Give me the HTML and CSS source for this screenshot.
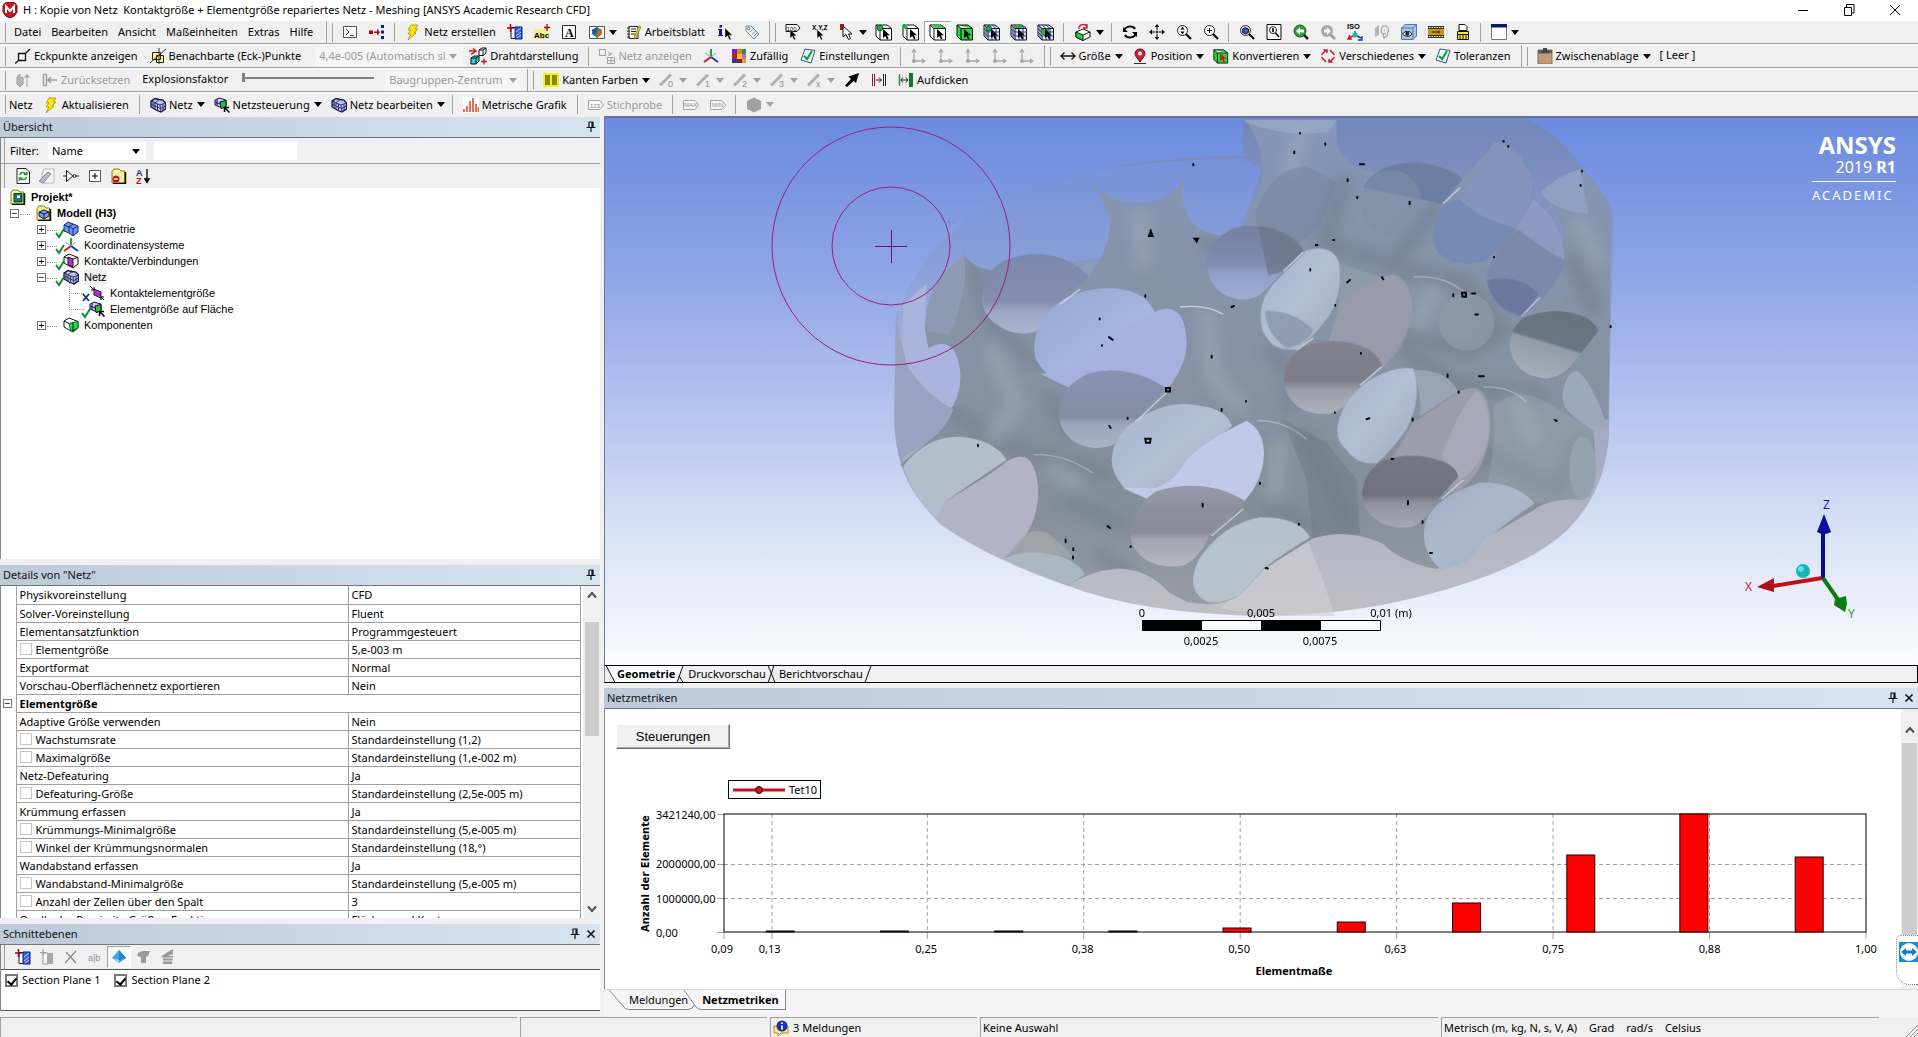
FILE: index.html
```html
<!DOCTYPE html>
<html lang="de">
<head>
<meta charset="utf-8">
<title>H : Kopie von Netz - Meshing</title>
<link rel="stylesheet" href="styles.css">
</head>
<body>

<svg class="defs" aria-hidden="true">
  <symbol id="cur" viewBox="0 0 16 16"><path d="M7 4V14L9.500 11.800L11.500 16L13.200 15.200L11.200 11.200H14.500Z" fill="#000" stroke="#fff" stroke-width=".4"/></symbol>
  <symbol id="app" viewBox="0 0 16 16"><path d="M1 4Q2 0 8 0Q14 0 15 4V10Q13 15 8 16Q3 15 1 10Z" fill="#c8161d" stroke="#7d0a10"/><path d="M4 11V4.500L8 9L12 4.500V11" fill="none" stroke="#fff" stroke-width="2"/></symbol>
  <symbol id="prompt" viewBox="0 0 16 16"><path d="M1.500 2.500H14.500V13.500H1.500Z" fill="#fff" stroke="#555"/><path d="M4 5L7 8L4 11M8 11.500H12" fill="none" stroke="#444"/></symbol>
  <symbol id="flow" viewBox="0 0 16 16"><path d="M0 6.500H4V10H0ZM5 7.500H8V9H5ZM8 5L11 8.200L8 11.500Z" fill="#b00018"/><path d="M12 1H15V4H12ZM12 6.500H15V9.500H12ZM12 12H15V15H12Z" fill="#0a14c8"/></symbol>
  <symbol id="bolt" viewBox="0 0 16 16"><path d="M6 1H13L10 5H13L9 9H11L3 16L6 10H3L6 6H3Z" fill="#ffe80a" stroke="#a89000" stroke-width=".8"/></symbol>
  <symbol id="plane" viewBox="0 0 16 16"><path d="M4 3.500H11V14.500H4Z" fill="#fff" stroke="#112"/><path d="M8 3H15V15H8Z" fill="#3a5fd0" stroke="#0a1a80"/><path d="M9 8L14 4M9 12L14 8M10 14L14 11" stroke="#bcd0ff"/><path d="M0 4H7M3.500 0V8" stroke="#a00018" stroke-width="1.500"/></symbol>
  <symbol id="abc" viewBox="0 0 16 16"><path d="M0 5H14V15H0Z" fill="#f7f08a"/><text x="0" y="14" font-size="8" font-weight="700">Abc</text><path d="M10 3.500H16M13 0V7" stroke="#a00018" stroke-width="1.300"/></symbol>
  <symbol id="figA" viewBox="0 0 16 16"><path d="M1.500 1.500H14.500V14.500H1.500Z" fill="#fff" stroke="#222"/><text x="4" y="12.500" font-size="12" class="serif">A</text></symbol>
  <symbol id="pic" viewBox="0 0 16 16"><path d="M.5 2.500H15.500V14.500H.5Z" fill="#fff" stroke="#555"/><path d="M3 6L8 3L13 6V10L8 14L3 10Z" fill="#13a04b"/><path d="M8 8L13 5V10L8 14Z" fill="#d5601a"/><path d="M3 6L8 3V9L4 11Z" fill="#1e50d0"/></symbol>
  <symbol id="sheet" viewBox="0 0 16 16"><path d="M3 2.500H12V14.500H3Z" fill="#fff" stroke="#222"/><path d="M5 5H10M5 7.500H10M5 10H9M1 4H4M1 7H4M1 10H4M1 13H4" stroke="#222"/><path d="M15 3L10 14L8.500 15V12L13 2Z" fill="#f0c030" stroke="#805a00" stroke-width=".6"/></symbol>
  <symbol id="icur" viewBox="0 0 16 16"><path d="M2 5H5V11H6V12H1V11H2V6H1V5ZM2.500 1H5V3.500H2.500Z" fill="#1010c0"/><use href="#cur" width="16" height="16" x="1"/></symbol>
  <symbol id="tag" viewBox="0 0 16 16"><path d="M2 2H7L15 10L10 15L2 7Z" fill="#e3eefa" stroke="#6f8fae"/><circle cx="4.500" cy="4.500" r="1.200" fill="#fff" stroke="#555" stroke-width=".7"/><path d="M6 8L10 4M8 10L12 7M10 12L13 9" stroke="#6f8fae" stroke-width=".8"/></symbol>
  <symbol id="c100" viewBox="0 0 16 16"><path d="M1 .5H12L15 4L12 7.500H1Z" fill="#fff" stroke="#111"/><text x="1.500" y="6.500" font-size="6">100</text><use href="#cur" y="2" x="-2" width="16" height="14"/></symbol>
  <symbol id="cxyz" viewBox="0 0 16 16"><text x="0" y="5.500" font-size="6.500" font-weight="700">X,Y,Z</text><use href="#cur" y="2" x="-2" width="16" height="14"/></symbol>
  <symbol id="redcur" viewBox="0 0 16 16"><path d="M1 0H5V6H1Z" fill="#b01020"/><path d="M4 2V13L7 10.500L9.500 15.500L11.500 14.500L9.500 10H13Z" fill="#fff" stroke="#111"/></symbol>
  <symbol id="box" viewBox="0 0 18 18"><path d="M1 2L5 5.500H16.500V17H5L1 13ZM5 5.500V17M1 2H12L16.500 5.500" stroke="#111" stroke-linejoin="round"/></symbol>
  <symbol id="cur2" viewBox="0 0 18 18"><path d="M8 6V15L10.200 13L12 16.500L13.500 15.700L12 12.300H15Z"/></symbol>
  <symbol id="selv" viewBox="0 0 18 18"><use href="#box" fill="#fff"/><circle cx="5" cy="5" r="2.800" fill="#1fb04a" stroke="#063"/><use href="#cur2"/></symbol>
  <symbol id="sele" viewBox="0 0 18 18"><use href="#box" fill="#fff"/><path d="M1 2L5 5.500" stroke="#1fb04a" stroke-width="3"/><use href="#cur2"/></symbol>
  <symbol id="self" viewBox="0 0 18 18"><use href="#box" fill="#fff"/><path d="M2 2.500H12L15 5H5.500Z" fill="#22e040"/><use href="#cur2"/></symbol>
  <symbol id="selb" viewBox="0 0 18 18"><use href="#box" fill="#1fdc35"/><use href="#cur2"/></symbol>
  <symbol id="conv" viewBox="0 0 18 18"><use href="#box" fill="#1fdc35"/><use href="#cur2" fill="#d01818"/></symbol>
  <symbol id="grid" viewBox="0 0 18 18"><use href="#box" fill="#e4e8ff"/><path d="M5 9H16M5 13H16M9 5V17M13 5V17M1 6L5 9M1 9.500L5 13M3 4V15M5 2L9 5.500M9 2L13 5.500" stroke="#223088" stroke-width=".9"/></symbol>
  <symbol id="mn" viewBox="0 0 18 18"><use href="#grid"/><circle cx="6" cy="5.500" r="2.500" fill="#1fb04a" stroke="#063"/><use href="#cur2"/></symbol>
  <symbol id="mf" viewBox="0 0 18 18"><use href="#grid"/><path d="M2 2.500H12L15 5H5.500Z" fill="#1fb04a"/><use href="#cur2"/></symbol>
  <symbol id="me" viewBox="0 0 18 18"><use href="#grid"/><path d="M5 6H12V13H5Z" fill="#1fb04a"/><use href="#cur2"/></symbol>
  <symbol id="crot" viewBox="0 0 18 18"><path d="M2 9L9 6L16 9V14L9 17.500L2 14Z" fill="#fff" stroke="#111"/><path d="M2 9L9 12V17.500L2 14Z" fill="#1fdc35" stroke="#111"/><path d="M9 12L16 9" stroke="#111"/><path d="M5 6C4 1 12 0 13 4M13 1V5H9" fill="none" stroke="#d01828" stroke-width="1.300"/></symbol>
  <symbol id="rot" viewBox="0 0 16 16"><path d="M2 7C3 2 11 1 13 5M14 9C13 14 5 15 3 11" fill="none" stroke="#000" stroke-width="2"/><path d="M1 3V8H6ZM15 13V8H10Z"/></symbol>
  <symbol id="pan" viewBox="0 0 16 16"><path d="M8 0L10.500 3H5.500ZM8 16L10.500 13H5.500ZM0 8L3 5.500V10.500ZM16 8L13 5.500V10.500Z"/><path d="M8 2V6M8 10V14M2 8H6M10 8H14M6.500 8H9.500M8 6.500V9.500" stroke="#000"/></symbol>
  <symbol id="lens" viewBox="0 0 16 16"><circle cx="6.500" cy="6.500" r="5" fill="#f5f8ff" stroke="#222"/><path d="M10 10L15 15" stroke="#111" stroke-width="2.300"/></symbol>
  <symbol id="zoom" viewBox="0 0 16 16"><use href="#lens"/><path d="M6.500 2.500L8.500 5.500H4.500ZM6.500 10.500L8.500 7.500H4.500Z"/></symbol>
  <symbol id="zoomb" viewBox="0 0 16 16"><use href="#lens"/><path d="M4 6.500H9M6.500 4V9" stroke="#222"/></symbol>
  <symbol id="fit" viewBox="0 0 16 16"><use href="#lens"/><path d="M3.500 5L6.500 3.500L9.500 5V8.500L6.500 10L3.500 8.500Z" fill="#3a56b8" stroke="#112"/></symbol>
  <symbol id="zbox" viewBox="0 0 16 16"><path d="M1 .5H15V15.500H1Z" fill="#fff" stroke="#000"/><circle cx="7" cy="6" r="3.500" fill="#fff" stroke="#222"/><path d="M7 4V8M9.500 9L13 13" stroke="#000" stroke-width="1.600"/></symbol>
  <symbol id="prev" viewBox="0 0 16 16"><circle cx="7" cy="7" r="6" fill="#2d9a3c" stroke="#1c5e26"/><path d="M11 11L15 15" stroke="#222" stroke-width="2.500"/><path d="M3 7L7 3V5.500H11V8.500H7V11Z" fill="#fff"/></symbol>
  <symbol id="next" viewBox="0 0 16 16"><circle cx="7" cy="7" r="6" fill="#a8a8a8"/><path d="M11 11L15 15" stroke="#999" stroke-width="2.500"/><path d="M11 7L7 3V5.500H4V8.500H7V11Z" fill="#f4f4f4"/></symbol>
  <symbol id="iso" viewBox="0 0 16 18"><text x="0" y="6" font-size="7.500" font-weight="700">ISO</text><path d="M8 12V8" stroke="#109040" stroke-width="1.500"/><path d="M8 12L2 15M3 12L1 16H5" stroke="#d01828" fill="none" stroke-width="1.400"/><path d="M8 12L14 15M11 17H15V13" stroke="#1530c0" fill="none" stroke-width="1.400"/><circle cx="8" cy="12" r="2.600" fill="#18b8c0"/></symbol>
  <symbol id="face" viewBox="0 0 16 16"><path d="M1 4L5 1V11L1 13Z" fill="#b4b4b4"/><path d="M8 3C12 0 16 4 14 8L13 12L10 14L9 10L7 8Z" fill="none" stroke="#a8a8a8" stroke-width="1.300"/><path d="M10 6H11M9 10L12 9" stroke="#999"/></symbol>
  <symbol id="eye" viewBox="0 0 16 16"><path d="M.5 4L4 .5H15.500V12L12 15.500H.5Z" fill="#a9c6ea" stroke="#5878a0"/><path d="M.5 4H12V15.500M12 4L15.500 .5" fill="none" stroke="#5878a0"/><path d="M1.500 10C4 6.500 9 6.500 11 10C9 13 4 13 1.500 10Z" fill="#fff" stroke="#111"/><circle cx="6.300" cy="9.800" r="2" fill="#123"/></symbol>
  <symbol id="film" viewBox="0 0 16 16"><path d="M0 2H16V14H0Z" fill="#3c3000"/><path d="M0 5H16V11H0Z" fill="#c9971c"/><path d="M1 3.500H16M1 12.500H16" stroke="#fff" stroke-dasharray="1.500 1"/><path d="M4 8H11M11 6.500V9.500" stroke="#5a3b00" stroke-width="1.300"/></symbol>
  <symbol id="print" viewBox="0 0 16 18"><path d="M4 1.500H10L12 3.500V7.500H4Z" fill="#fff" stroke="#111"/><path d="M2.500 8.500H13.500V16.500H2.500Z" fill="#ffe94a" stroke="#111"/><path d="M5 12V16M8 12V16M11 12V16M2 11.500H14" stroke="#111"/></symbol>
  <symbol id="win" viewBox="0 0 16 16"><path d="M.5 .5H15.500V15.500H.5Z" fill="#fff" stroke="#777"/><path d="M0 0H16V3.500H0Z" fill="#0a1a66"/></symbol>
  <symbol id="eck" viewBox="0 0 16 16"><path d="M3.500 5.500H10.500V12.500H3.500ZM10.500 5.500L15 1M3.500 12.500L0 15.500" fill="none" stroke="#111" stroke-width="1.300"/></symbol>
  <symbol id="nach" viewBox="0 0 16 16"><path d="M2.500 4.500H10.500V11.500H2.500ZM6.500 7.500H13.500V14.500H6.500Z" fill="#fff27a" stroke="#222"/><path d="M0 15L16 1M9 0V16" stroke="#333"/></symbol>
  <symbol id="draht" viewBox="0 0 18 18"><path d="M10 3L13 1H17V6L14 8.500H10ZM10 3H14V8.500M14 3L17 1" fill="#fff" stroke="#111"/><path d="M2 11L5 9H10V14L7 17H2ZM2 11H7V17M7 11L10 9" fill="#2fd0d8" stroke="#111"/><path d="M0 4H6M4 1.500L7 4L4 6.500M2 7L4 6M12 14.500H18M15 11.500V17.500" stroke="#c01828" fill="none" stroke-width="1.400"/></symbol>
  <symbol id="show" viewBox="0 0 16 16"><path d="M.5 1.500H6.500V7.500H.5ZM9 4L12 7M12 4V7H9M8.500 9.500H15.500V15.500H8.500ZM12 9.500V15.500M8.500 12.500H15.500" fill="none" stroke="#a0a0a0"/></symbol>
  <symbol id="axes" viewBox="0 0 16 16"><path d="M8 9V1" stroke="#18a838" stroke-width="2"/><path d="M8 9L1 14" stroke="#d01828" stroke-width="2"/><path d="M8 9L15 14" stroke="#1838c0" stroke-width="2"/><path d="M8 9L2 5M8 9L13 5" stroke="#89a"/></symbol>
  <symbol id="rand" viewBox="0 0 16 16"><path d="M1 1H6V6H1Z" fill="#7a1fb0"/><path d="M6 1H11V6H6Z" fill="#e08020"/><path d="M11 1H15V6H11Z" fill="#1f8f5a"/><path d="M1 6H6V11H1Z" fill="#c01828"/><path d="M6 6H11V11H6Z" fill="#e8d020"/><path d="M11 6H15V11H11Z" fill="#d060c0"/><path d="M1 11H6V15H1Z" fill="#1a40a0"/><path d="M6 11H11V15H6Z" fill="#802020"/><path d="M11 11H15V15H11Z" fill="#e0a040"/></symbol>
  <symbol id="sett" viewBox="0 0 16 16"><path d="M5 1L15 2.500L11 15L1 12Z" fill="#f2f8ff" stroke="#2b5a88"/><path d="M4 8L7 11L12 3" fill="none" stroke="#14a030" stroke-width="2.200"/></symbol>
  <symbol id="ax" viewBox="0 0 16 16"><path d="M4 13V2M2 4.500L4 1.500L6 4.500M4 13H14M12 11L15 13L12 15" fill="none" stroke="#a6a6a6" stroke-width="1.300"/><circle cx="4" cy="13" r="2" fill="#a6a6a6"/></symbol>
  <symbol id="size" viewBox="0 0 16 16"><path d="M1 8H15M4.500 4.500L1 8L4.500 11.500M11.500 4.500L15 8L11.500 11.500" fill="none" stroke="#111" stroke-width="1.300"/></symbol>
  <symbol id="pin" viewBox="0 0 16 16"><path d="M8 1C3 1 2 6 4 8.500L8 14L12 8.500C14 6 13 1 8 1Z" fill="#c8203a" stroke="#701020"/><circle cx="8" cy="5.500" r="2" fill="#fff"/><path d="M2 15.500H14" stroke="#333"/></symbol>
  <symbol id="misc" viewBox="0 0 16 16"><path d="M6 2L1.500 7M1.500 9L6 14M10 14L14.500 9M14.500 7L10 2M3.500 2H7V5M12.500 14H9V11" fill="none" stroke="#c81840" stroke-width="1.500"/></symbol>
  <symbol id="clip" viewBox="0 0 16 16"><path d="M1 2H15V16H1Z" fill="#c39a78" stroke="#8d6b50"/><path d="M1 2H15V5.500H1Z" fill="#6b5c55"/><path d="M6 0H10V3H12V5H4V3H6Z" fill="#444"/></symbol>
  <symbol id="expl" viewBox="0 0 16 16"><path d="M2 5L5 2V6L8 5V12L5 15L2 12ZM12 15V3M9.500 5.500L12 2.500L14.500 5.500" fill="#b5b5b5" stroke="#a0a0a0"/></symbol>
  <symbol id="reset" viewBox="0 0 16 16"><path d="M1.500 2.500H4.500V13.500H1.500ZM6 8H15M9 5L6 8L9 11" fill="none" stroke="#a0a0a0" stroke-width="1.500"/></symbol>
  <symbol id="kant" viewBox="0 0 16 16"><path d="M0 1H16V15H0Z" fill="#f4f020"/><path d="M2 3H7V13H2ZM9 3H14V13H9Z" fill="#8a8600"/></symbol>
  <symbol id="line" viewBox="0 0 16 16"><path d="M1 13.500L12 2.500" stroke="#b0b0b0" stroke-width="3"/></symbol>
  <symbol id="dart" viewBox="0 0 16 16"><path d="M15 1L12 11L9.500 9L3 15L1 13.500L7 7L4.500 4.500Z"/></symbol>
  <symbol id="ll" viewBox="0 0 16 16"><path d="M1.500 2V14M3.500 2V14" stroke="#9c1030"/><path d="M12.500 2V14M14.500 2V14M5 8H10M8 5.500L10.500 8L8 10.500" stroke="#222" fill="none"/></symbol>
  <symbol id="auf" viewBox="0 0 16 16"><path d="M1.500 2V14" stroke="#1b8a30" stroke-width="1.400"/><path d="M11 1H15V15H11Z" fill="#137a28"/><path d="M3 8H10M5 5.500L3 8L5 10.500M8 5.500L10 8L8 10.500" stroke="#222" fill="none"/></symbol>
  <symbol id="cubes" viewBox="0 0 16 16"><path d="M1 4L5 1.500L9 2.500L13 3L15.500 6V12L11 15L7 13.500L1 10Z" fill="#bcc2f2" stroke="#15154a" stroke-width="1.300"/><path d="M1 4L5 6V12M5 6L9 2.500M5 6L10 8L15.500 6M10 8L11 15M3 3V11M7.500 7V13M13 7V14M1 7L5 9L10.500 11.500L15.500 9" stroke="#15154a" fill="none" stroke-width=".8"/></symbol>
  <symbol id="cubesg" viewBox="0 0 16 16"><path d="M1 3L5 1L12 3V9L8 11L1 8Z" fill="#c4c9f4" stroke="#15154a"/><path d="M6 5L12 3.500V10L7 11.500Z" fill="#28c040" stroke="#111"/><path d="M3 2V9M1 5L6 7" stroke="#15154a"/><path d="M15.500 15.500L11 11M10.500 15V10.500H15" stroke="#000" stroke-width="1.500" fill="none"/></symbol>
  <symbol id="hist" viewBox="0 0 16 16"><path d="M0 0H16V16H0Z" fill="#fff"/><path d="M1 15V12M4 15V9M7 15V4M10 15V1M13 15V7M15.500 15V10" stroke="#df6a4d" stroke-width="1.900"/></symbol>
  <symbol id="probe" viewBox="0 0 16 16"><path d="M.5 3.500H12L15.500 8L12 12.500H.5Z" fill="#f6f6f6" stroke="#a4a4a4"/></symbol>
  <symbol id="hex" viewBox="0 0 16 16"><path d="M8 .5L15 4V12L8 15.500L1 12V4Z" fill="#a0a0a0"/></symbol>
  <symbol id="refresh" viewBox="0 0 16 16"><path d="M2 .5H11L14.500 4V15.500H2Z" fill="#fff" stroke="#222"/><path d="M5 7C5 4 10 3.500 11 6.500M11.500 9C11 12 6 12.500 5 10M9 6.500H12V4M7.500 10H4.500V13" fill="none" stroke="#1c9a34" stroke-width="1.500"/></symbol>
  <symbol id="erase" viewBox="0 0 16 16"><path d="M5 1H15V15H3V6Z" fill="#f5f5f8" stroke="#b8b8c0"/><path d="M0 13L9 4L12 6L4 15Z" fill="#b9bccb" stroke="#85879a"/></symbol>
  <symbol id="filt" viewBox="0 0 16 16"><path d="M3.500 2.500L10 8L3.500 13.500ZM0 8H3M12.500 8H16" fill="none" stroke="#222"/><circle cx="11.500" cy="8" r="1.500" fill="none" stroke="#222"/></symbol>
  <symbol id="plus" viewBox="0 0 16 16"><path d="M2.500 2.500H13.500V13.500H2.500Z" fill="#fff" stroke="#555"/><path d="M5 8H11M8 5V11" stroke="#000"/></symbol>
  <symbol id="fold" viewBox="0 0 16 16"><path d="M1 3.500L3 1H8L10 3H13.500V15H1Z" fill="#f4ef9a" stroke="#8c7a1c"/><path d="M14.500 4V15.500H2" stroke="#111" fill="none" stroke-width="1.500"/></symbol>
  <symbol id="folder" viewBox="0 0 16 16"><use href="#fold"/><circle cx="5" cy="11" r="3.500" fill="#c0182a"/><path d="M3 11H7" stroke="#fff" stroke-width="1.400"/></symbol>
  <symbol id="az" viewBox="0 0 16 16"><text x="1" y="7.500" font-size="9" font-weight="700" fill="#1a2a90">A</text><text x="1" y="15.500" font-size="9" font-weight="700" fill="#b01828">Z</text><path d="M12 1V14M9.800 11L12 14.500L14.200 11Z" stroke="#000" stroke-width="1.300"/></symbol>
  <symbol id="proj" viewBox="0 0 16 16"><use href="#fold"/><path d="M4 4.500H12V13H4Z" fill="#16806a" stroke="#04362c"/><path d="M7 6.500H10V9H7Z" fill="#fff"/></symbol>
  <symbol id="model" viewBox="0 0 16 16"><use href="#fold"/><path d="M3 7L8 5L13 7V11L8 14L3 11Z" fill="#7f9be8" stroke="#101848"/><path d="M3 7L8 9L13 7M8 9V14" stroke="#101848" fill="none"/></symbol>
  <symbol id="geo" viewBox="0 0 16 16"><path d="M1 4L5 1L9 2.500L15 5V11L10 15L6 12L1 10Z" fill="#6e97ea" stroke="#122a78"/><path d="M1 4L6 6V12M6 6L10 3M10 8V15M6 5L10 8L15 5" stroke="#122a78" fill="none"/></symbol>
  <symbol id="kont" viewBox="0 0 16 16"><path d="M1 4L6 1L15 4.500V11L10 15L1 10Z" fill="#fff" stroke="#111"/><path d="M5 4L10 6V14L5 12Z" fill="#a838c0" stroke="#301038"/><path d="M10 6L15 4.500M1 4L5 5.500" stroke="#111"/></symbol>
  <symbol id="ctc" viewBox="0 0 16 16"><path d="M5 4L12 7V13L5 10Z" fill="#a838c0" stroke="#301038"/><path d="M1 1L5 5M5 2V5H2M15 15L12 12M12 15V12H15" stroke="#000" fill="none"/></symbol>
  <symbol id="komp" viewBox="0 0 16 16"><path d="M1 4L6 1L15 4.500V11L10 15L1 10Z" fill="#fff" stroke="#111"/><path d="M6 6.500L15 4.500V11L8 14.500Z" fill="#28dc40" stroke="#063"/><path d="M1 4L6 6.500M10 6V14" stroke="#111"/></symbol>
  <symbol id="check" viewBox="0 0 16 16"><path d="M4 9L7 13L12 5" fill="none" stroke="#128a28" stroke-width="2"/></symbol>
  <symbol id="cross" viewBox="0 0 16 16"><path d="M5 6L11 13M11 6L5 13" stroke="#123070" stroke-width="1.800"/></symbol>
  <symbol id="push" viewBox="0 0 12 12"><path d="M3.500 1H8.500M4 1V6.500M8 1V6.500M7 1V6M1.500 6.500H10.500M6 7V11" stroke="#111" stroke-width="1.200"/></symbol>
  <symbol id="close" viewBox="0 0 12 12"><path d="M2.500 2.500L9.500 9.500M9.500 2.500L2.500 9.500" stroke="#111" stroke-width="1.600"/></symbol>
  <symbol id="splane" viewBox="0 0 16 16"><path d="M4 4H9V15H4Z" fill="#f6f6f6" stroke="#999"/><path d="M8 4H14V15H8Z" fill="#a8a8a8"/><path d="M1 3.500H7M4 0V7" stroke="#999"/></symbol>
  <symbol id="gx" viewBox="0 0 16 16"><path d="M3 3L13 14M13 2L2 14" stroke="#888" stroke-width="1.200"/></symbol>
  <symbol id="cap" viewBox="0 0 16 16"><path d="M8 1L15 9L8 14L1 9Z" fill="#3fa6e2"/><path d="M8 1L15 9L8 11Z" fill="#2c7fc4"/><path d="M1 9L8 11V14Z" fill="#9bd4f5"/></symbol>
  <symbol id="gcap" viewBox="0 0 16 16"><path d="M3 4L7 2H15L13 7L11 8V14H6V8L2 7Z" fill="#999"/></symbol>
  <symbol id="gcap2" viewBox="0 0 16 16"><path d="M7 4L14 0V5L9 7H14L13 15H4V9L2 8Z" fill="#999"/><path d="M3 9H14M4 12H14" stroke="#e8e8e8"/></symbol>
  <symbol id="info" viewBox="0 0 16 16"><path d="M1 6H15V13H8L5 16V13H1Z" fill="#ffe98a" stroke="#b08a10"/><circle cx="9" cy="6" r="5.500" fill="#1233b8"/><path d="M9 5.500V9.500M9 2.500V4" stroke="#fff" stroke-width="1.800"/></symbol>
  <symbol id="up" viewBox="0 0 12 12"><path d="M2 8.500L6 4L10 8.500" fill="none" stroke="#505050" stroke-width="2"/></symbol>
</svg>

<header class="title">
  <svg class="i"><use href="#app"/></svg>
  <h1>H : Kopie von Netz&nbsp; Kontaktgröße + Elementgröße repariertes Netz - Meshing [ANSYS Academic Research CFD]</h1>
  <div class="winbtns">
    <button aria-label="Minimieren"><svg viewBox="0 0 12 12"><path d="M1 6.500H11" stroke="#000"/></svg></button>
    <button aria-label="Verkleinern"><svg viewBox="0 0 12 12"><path d="M1.500 3.500H8.500V11.500H1.500ZM3.500 3V.5H11V9H9" fill="none" stroke="#000"/></svg></button>
    <button aria-label="Schließen"><svg viewBox="0 0 12 12"><path d="M1 1L11 11M11 1L1 11" stroke="#000"/></svg></button>
  </div>
</header>

<div class="toolbars">
  <div class="row">
    <nav class="bar menu">
      <button>Datei</button><button>Bearbeiten</button><button>Ansicht</button><button>Maßeinheiten</button><button>Extras</button><button>Hilfe</button>
    </nav>
    <div class="bar">
      <button class="ic" aria-label="Konsole"><svg class="i"><use href="#prompt"/></svg></button>
      <button class="ic" aria-label="Verknüpfen"><svg class="i"><use href="#flow"/></svg></button>
      <i class="sep"></i>
      <button><svg class="i"><use href="#bolt"/></svg>Netz erstellen</button>
      <button class="ic" aria-label="Ebene"><svg class="i"><use href="#plane"/></svg></button>
      <button class="ic" aria-label="Beschriftung"><svg class="i"><use href="#abc"/></svg></button>
      <button class="ic" aria-label="Abbildung"><svg class="i"><use href="#figA"/></svg></button>
      <button class="drop" aria-label="Bild"><svg class="i"><use href="#pic"/></svg></button>
      <button><svg class="i"><use href="#sheet"/></svg>Arbeitsblatt</button>
      <button class="ic" aria-label="Information"><svg class="i"><use href="#icur"/></svg></button>
      <button class="ic" aria-label="Etikett"><svg class="i"><use href="#tag"/></svg></button>
    </div>
    <div class="bar">
      <button class="ic" aria-label="Wert"><svg class="i"><use href="#c100"/></svg></button>
      <button class="ic" aria-label="Koordinaten"><svg class="i"><use href="#cxyz"/></svg></button>
      <button class="drop" aria-label="Auswahlmodus"><svg class="i"><use href="#redcur"/></svg></button>
      <button class="ic" aria-label="Punkt"><svg class="i b"><use href="#selv"/></svg></button>
      <button class="ic" aria-label="Kante"><svg class="i b"><use href="#sele"/></svg></button>
      <button class="ic on" aria-label="Fläche"><svg class="i b"><use href="#self"/></svg></button>
      <button class="ic" aria-label="Körper"><svg class="i b"><use href="#selb"/></svg></button>
      <button class="ic" aria-label="Knoten"><svg class="i b"><use href="#mn"/></svg></button>
      <button class="ic" aria-label="Elementfläche"><svg class="i b"><use href="#mf"/></svg></button>
      <button class="ic" aria-label="Element"><svg class="i b"><use href="#me"/></svg></button>
      <i class="sep"></i>
      <button class="drop" aria-label="Erweitern"><svg class="i b"><use href="#crot"/></svg></button>
      <i class="sep"></i>
      <button class="ic" aria-label="Drehen"><svg class="i"><use href="#rot"/></svg></button>
      <button class="ic" aria-label="Verschieben"><svg class="i"><use href="#pan"/></svg></button>
      <button class="ic" aria-label="Zoom"><svg class="i"><use href="#zoom"/></svg></button>
      <button class="ic" aria-label="Zoomfenster"><svg class="i"><use href="#zoomb"/></svg></button>
      <i class="sep"></i>
      <button class="ic" aria-label="Einpassen"><svg class="i"><use href="#fit"/></svg></button>
      <button class="ic" aria-label="Lupe"><svg class="i"><use href="#zbox"/></svg></button>
      <button class="ic" aria-label="Zurück"><svg class="i"><use href="#prev"/></svg></button>
      <button class="ic" aria-label="Vor"><svg class="i"><use href="#next"/></svg></button>
      <button class="ic" aria-label="ISO"><svg class="i b"><use href="#iso"/></svg></button>
      <button class="ic" aria-label="Blickrichtung"><svg class="i"><use href="#face"/></svg></button>
      <button class="ic" aria-label="Ansichten"><svg class="i"><use href="#eye"/></svg></button>
      <button class="ic" aria-label="Animation"><svg class="i"><use href="#film"/></svg></button>
      <button class="ic" aria-label="Lineal"><svg class="i b"><use href="#print"/></svg></button>
      <i class="sep"></i>
      <button class="drop" aria-label="Fenster"><svg class="i"><use href="#win"/></svg></button>
    </div>
  </div>

  <div class="row">
    <div class="bar">
      <button><svg class="i"><use href="#eck"/></svg>Eckpunkte anzeigen</button>
      <button><svg class="i"><use href="#nach"/></svg>Benachbarte (Eck-)Punkte</button>
      <span class="sel tol"><select disabled aria-label="Toleranz"><option>4,4e-005 (Automatisch skaliert)</option></select></span>
      <button><svg class="i b"><use href="#draht"/></svg>Drahtdarstellung</button>
      <i class="sep"></i>
      <button disabled><svg class="i"><use href="#show"/></svg>Netz anzeigen</button>
      <button class="ic" aria-label="Koordinatensystem"><svg class="i"><use href="#axes"/></svg></button>
      <button><svg class="i"><use href="#rand"/></svg>Zufällig</button>
      <button><svg class="i"><use href="#sett"/></svg>Einstellungen</button>
      <i class="sep"></i>
      <button class="ic" disabled aria-label="Achse 1"><svg class="i"><use href="#ax"/></svg></button>
      <button class="ic" disabled aria-label="Achse 2"><svg class="i"><use href="#ax"/></svg></button>
      <button class="ic" disabled aria-label="Achse 3"><svg class="i"><use href="#ax"/></svg></button>
      <button class="ic" disabled aria-label="Achse 4"><svg class="i"><use href="#ax"/></svg></button>
      <button class="ic" disabled aria-label="Achse 5"><svg class="i"><use href="#ax"/></svg></button>
    </div>
    <div class="bar">
      <button class="drop"><svg class="i"><use href="#size"/></svg>Größe</button>
      <button class="drop"><svg class="i"><use href="#pin"/></svg>Position</button>
      <button class="drop"><svg class="i"><use href="#conv"/></svg>Konvertieren</button>
      <button class="drop"><svg class="i"><use href="#misc"/></svg>Verschiedenes</button>
      <button><svg class="i"><use href="#sett"/></svg>Toleranzen</button>
    </div>
    <div class="bar">
      <button class="drop"><svg class="i"><use href="#clip"/></svg>Zwischenablage</button>
      <span class="note">[ Leer ]</span>
    </div>
  </div>

  <div class="row">
    <div class="bar">
      <button class="ic" disabled aria-label="Explosion"><svg class="i"><use href="#expl"/></svg></button>
      <button disabled><svg class="i"><use href="#reset"/></svg>Zurücksetzen</button>
      <label class="note" for="expf">Explosionsfaktor</label>
      <input class="slider" id="expf" type="range" value="0">
      <span class="sel"><select disabled aria-label="Zentrum"><option>Baugruppen-Zentrum</option></select></span>
    </div>
    <div class="bar">
      <button class="drop"><svg class="i"><use href="#kant"/></svg>Kanten Farben</button>
      <button class="drop" disabled aria-label="0"><svg class="i"><use href="#line"/><text x="9" y="15">0</text></svg></button>
      <button class="drop" disabled aria-label="1"><svg class="i"><use href="#line"/><text x="9" y="15">1</text></svg></button>
      <button class="drop" disabled aria-label="2"><svg class="i"><use href="#line"/><text x="9" y="15">2</text></svg></button>
      <button class="drop" disabled aria-label="3"><svg class="i"><use href="#line"/><text x="9" y="15">3</text></svg></button>
      <button class="drop" disabled aria-label="x"><svg class="i"><use href="#line"/><text x="9" y="15">x</text></svg></button>
      <button class="ic" aria-label="Pfeil"><svg class="i"><use href="#dart"/></svg></button>
      <button class="ic" aria-label="Abstand"><svg class="i"><use href="#ll"/></svg></button>
      <button><svg class="i"><use href="#auf"/></svg>Aufdicken</button>
    </div>
  </div>

  <div class="row">
    <div class="bar">
      <span class="name">Netz</span>
      <button><svg class="i"><use href="#bolt"/></svg>Aktualisieren</button>
      <i class="sep"></i>
      <button class="drop"><svg class="i"><use href="#cubes"/></svg>Netz</button>
      <button class="drop"><svg class="i"><use href="#cubesg"/></svg>Netzsteuerung</button>
      <button class="drop"><svg class="i"><use href="#cubes"/></svg>Netz bearbeiten</button>
      <i class="sep"></i>
      <button><svg class="i"><use href="#hist"/></svg>Metrische Grafik</button>
      <i class="sep"></i>
      <button disabled><svg class="i"><use href="#probe"/><text class="xs" x="2" y="11">123</text></svg>Stichprobe</button>
      <i class="sep"></i>
      <button class="ic" disabled aria-label="MAX"><svg class="i"><use href="#probe"/><text class="xs" x="1" y="10">MAX</text></svg></button>
      <button class="ic" disabled aria-label="MIN"><svg class="i"><use href="#probe"/><text class="xs" x="2" y="10">MIN</text></svg></button>
      <i class="sep"></i>
      <button class="drop" disabled aria-label="Körper"><svg class="i"><use href="#hex"/></svg></button>
    </div>
  </div>
</div>

<main class="work">
  <div class="left">
    <section class="panel outline">
      <h2>Übersicht<svg class="pb"><use href="#push"/></svg></h2>
      <div class="frame">
        <div class="filter">
          <label for="ff">Filter:</label>
          <span class="sel white"><select id="ff"><option>Name</option></select></span>
          <input class="search" type="text" aria-label="Filtertext">
        </div>
        <div class="tools">
          <button class="ic" aria-label="Aktualisieren"><svg class="i"><use href="#refresh"/></svg></button>
          <button class="ic" aria-label="Löschen"><svg class="i"><use href="#erase"/></svg></button>
          <button class="ic" aria-label="Filter"><svg class="i"><use href="#filt"/></svg></button>
          <button class="ic" aria-label="Erweitern"><svg class="i"><use href="#plus"/></svg></button>
          <button class="ic" aria-label="Ordner"><svg class="i"><use href="#folder"/></svg></button>
          <button class="ic" aria-label="Sortieren"><svg class="i"><use href="#az"/></svg></button>
        </div>
        <ul class="tree">
          <li class="top"><svg class="i"><use href="#proj"/></svg><b>Projekt*</b></li>
          <li><span class="tg">−</span><svg class="i"><use href="#model"/></svg><b>Modell (H3)</b></li>
          <li class="l1"><span class="tg">+</span><svg class="i ok"><use href="#check"/></svg><svg class="i"><use href="#geo"/></svg><span>Geometrie</span></li>
          <li class="l1"><span class="tg">+</span><svg class="i ok"><use href="#check"/></svg><svg class="i"><use href="#axes"/></svg><span>Koordinatensysteme</span></li>
          <li class="l1"><span class="tg">+</span><svg class="i ok"><use href="#check"/></svg><svg class="i"><use href="#kont"/></svg><span>Kontakte/Verbindungen</span></li>
          <li class="l1"><span class="tg">−</span><svg class="i ok"><use href="#check"/></svg><svg class="i"><use href="#cubes"/></svg><span class="cursel">Netz</span></li>
          <li class="l2"><svg class="i ok"><use href="#cross"/></svg><svg class="i"><use href="#ctc"/></svg><span>Kontaktelementgröße</span></li>
          <li class="l2"><svg class="i ok"><use href="#check"/></svg><svg class="i"><use href="#cubesg"/></svg><span>Elementgröße auf Fläche</span></li>
          <li class="l1"><span class="tg">+</span><svg class="i ok"></svg><svg class="i"><use href="#komp"/></svg><span>Komponenten</span></li>
        </ul>
      </div>
    </section>

    <section class="panel details">
      <h2>Details von "Netz"<svg class="pb"><use href="#push"/></svg></h2>
      <div class="frame split">
        <div class="clipbox">
          <table>
            <tr><td class="g"></td><th>Physikvoreinstellung</th><td>CFD</td></tr>
            <tr><td class="g"></td><th>Solver-Voreinstellung</th><td>Fluent</td></tr>
            <tr><td class="g"></td><th>Elementansatzfunktion</th><td>Programmgesteuert</td></tr>
            <tr><td class="g"></td><th><label><input type="checkbox">Elementgröße</label></th><td>5,e-003 m</td></tr>
            <tr><td class="g"></td><th>Exportformat</th><td>Normal</td></tr>
            <tr><td class="g"></td><th>Vorschau-Oberflächennetz exportieren</th><td>Nein</td></tr>
            <tr><td class="g"><span class="tg">−</span></td><th colspan="2" class="head">Elementgröße</th></tr>
            <tr><td class="g"></td><th>Adaptive Größe verwenden</th><td>Nein</td></tr>
            <tr><td class="g"></td><th><label><input type="checkbox">Wachstumsrate</label></th><td>Standardeinstellung (1,2)</td></tr>
            <tr><td class="g"></td><th><label><input type="checkbox">Maximalgröße</label></th><td>Standardeinstellung (1,e-002 m)</td></tr>
            <tr><td class="g"></td><th>Netz-Defeaturing</th><td>Ja</td></tr>
            <tr><td class="g"></td><th><label><input type="checkbox">Defeaturing-Größe</label></th><td>Standardeinstellung (2,5e-005 m)</td></tr>
            <tr><td class="g"></td><th>Krümmung erfassen</th><td>Ja</td></tr>
            <tr><td class="g"></td><th><label><input type="checkbox">Krümmungs-Minimalgröße</label></th><td>Standardeinstellung (5,e-005 m)</td></tr>
            <tr><td class="g"></td><th><label><input type="checkbox">Winkel der Krümmungsnormalen</label></th><td>Standardeinstellung (18,°)</td></tr>
            <tr><td class="g"></td><th>Wandabstand erfassen</th><td>Ja</td></tr>
            <tr><td class="g"></td><th><label><input type="checkbox">Wandabstand-Minimalgröße</label></th><td>Standardeinstellung (5,e-005 m)</td></tr>
            <tr><td class="g"></td><th><label><input type="checkbox">Anzahl der Zellen über den Spalt</label></th><td>3</td></tr>
            <tr><td class="g"></td><th>Quelle der Proximity-Größen-Funktion</th><td>Flächen und Kanten</td></tr>
          </table>
        </div>
        <div class="scroll"><svg><use href="#up"/></svg><i class="thumb t1"></i><svg class="dn"><use href="#up"/></svg></div>
      </div>
    </section>

    <section class="panel planes">
      <h2>Schnittebenen<svg class="pb"><use href="#push"/></svg><svg class="pb"><use href="#close"/></svg></h2>
      <div class="frame">
        <div class="tools">
          <button class="sm" aria-label="Neu"><svg class="i"><use href="#plane"/></svg></button>
          <button class="sm" disabled aria-label="Bearbeiten"><svg class="i"><use href="#splane"/></svg></button>
          <button class="sm" disabled aria-label="Löschen"><svg class="i"><use href="#gx"/></svg></button>
          <button class="sm" disabled aria-label="Umbenennen"><svg class="i"><text x="1" y="12">a|b</text></svg></button>
          <button class="sm on" aria-label="Deckel"><svg class="i"><use href="#cap"/></svg></button>
          <button class="sm" disabled aria-label="Ganze Elemente"><svg class="i"><use href="#gcap"/></svg></button>
          <button class="sm" disabled aria-label="Elementkanten"><svg class="i"><use href="#gcap2"/></svg></button>
        </div>
        <div class="list">
          <label><input type="checkbox" checked>Section Plane 1</label>
          <label><input type="checkbox" checked>Section Plane 2</label>
        </div>
      </div>
    </section>
  </div>

  <div class="right">
    <section class="view" aria-label="Geometrie">
      <svg class="model" viewBox="605 118 1313 547" preserveAspectRatio="xMidYMid slice">
        <defs>
          <linearGradient id="body" gradientUnits="userSpaceOnUse" x1="0" y1="0" x2="0" y2="1480"><stop offset="0" stop-color="#7287ba"/><stop offset=".2" stop-color="#8294c2"/><stop offset=".5" stop-color="#98a3c0"/><stop offset=".75" stop-color="#acb0c2"/><stop offset="1" stop-color="#c0bfc6"/></linearGradient>
          <linearGradient id="thin" gradientUnits="userSpaceOnUse" x1="0" y1="100" x2="0" y2="700"><stop offset="0" stop-color="#7590dc"/><stop offset=".6" stop-color="#8ba0d8"/><stop offset="1" stop-color="#a4b2dc"/></linearGradient>
          <linearGradient id="foam" gradientUnits="userSpaceOnUse" x1="0" y1="0" x2="0" y2="1450"><stop offset="0" stop-color="#8496b8"/><stop offset=".25" stop-color="#8594ac"/><stop offset=".5" stop-color="#8693a4"/><stop offset=".8" stop-color="#858f99"/><stop offset="1" stop-color="#969ca3"/></linearGradient>
          <linearGradient id="pale" x1="0" y1="0" x2="1" y2="1"><stop offset="0" stop-color="#a6b4cd"/><stop offset=".5" stop-color="#b2c0d6"/><stop offset="1" stop-color="#a0acbd"/></linearGradient>
          <linearGradient id="sky" x1="0" y1="0" x2="1" y2="1"><stop offset="0" stop-color="#94a6d2"/><stop offset=".5" stop-color="#a6b6df"/><stop offset="1" stop-color="#b2bde6"/></linearGradient>
          <linearGradient id="cA" x1="0" y1="0" x2="0" y2="1"><stop offset="0" stop-color="#7b88ae"/><stop offset=".6" stop-color="#8590ae"/><stop offset=".72" stop-color="#9ca8c6"/><stop offset="1" stop-color="#aab3cc"/></linearGradient>
          <linearGradient id="cB" x1="0" y1="0" x2="0" y2="1"><stop offset="0" stop-color="#8891b0"/><stop offset=".6" stop-color="#858da6"/><stop offset=".7" stop-color="#9da5bc"/><stop offset="1" stop-color="#aab3c8"/></linearGradient>
          <linearGradient id="cC" x1="0" y1="0" x2="0" y2="1"><stop offset="0" stop-color="#989ba8"/><stop offset=".3" stop-color="#8c909c"/><stop offset=".58" stop-color="#898c97"/><stop offset=".66" stop-color="#a2a5b0"/><stop offset="1" stop-color="#b6b9c0"/></linearGradient>
          <linearGradient id="cD" x1="0" y1="0" x2="0" y2="1"><stop offset="0" stop-color="#7481a0"/><stop offset=".52" stop-color="#7e8cb0"/><stop offset=".64" stop-color="#91a0c8"/><stop offset="1" stop-color="#a0aed2"/></linearGradient>
          <linearGradient id="cE" x1="0" y1="0" x2="0" y2="1"><stop offset="0" stop-color="#83838f"/><stop offset=".54" stop-color="#7c7d88"/><stop offset=".68" stop-color="#9c9fa9"/><stop offset="1" stop-color="#adb3bd"/></linearGradient>
          <linearGradient id="cF" x1="0" y1="0" x2="0" y2="1"><stop offset="0" stop-color="#757883"/><stop offset=".54" stop-color="#6f727d"/><stop offset=".66" stop-color="#8d929d"/><stop offset="1" stop-color="#a5abb5"/></linearGradient>
          <linearGradient id="cG" x1=".7" y1="0" x2=".3" y2="1"><stop offset="0" stop-color="#697380"/><stop offset=".48" stop-color="#6c7583"/><stop offset=".52" stop-color="#949cab"/><stop offset="1" stop-color="#a8b0bc"/></linearGradient>
          <filter id="soft" x="-30%" y="-30%" width="160%" height="160%"><feGaussianBlur stdDeviation="20"/></filter>
          <clipPath id="foamclip"><use href="#foamshape"/></clipPath>
          <path id="foamshape" d="M1020 180Q1120 265 1200 262Q1290 255 1330 190L1362 135Q1318 210 1327 250Q1345 345 1440 357L1500 335Q1570 240 1568 160Q1565 80 1515 15H1790V90Q1830 160 1900 170Q1990 125 2100 150Q2150 165 2165 190Q2220 140 2265 80Q2300 85 2340 120Q2400 200 2370 290Q2470 360 2475 430Q2480 300 2400 230Q2450 180 2520 160Q2590 220 2610 290V640L2605 900H2510L2560 935Q2575 1050 2530 1138Q2430 1130 2380 1170Q2290 1220 2230 1260Q2190 1345 2080 1342Q1980 1320 1930 1270Q1830 1220 1720 1252L1570 1345L1500 1420Q1440 1460 1340 1440L1290 1415Q1220 1340 1130 1342Q1050 1350 985 1392L790 1312L480 1035L560 970L555 690Q545 580 600 480L672 412Q700 455 760 460L850 520L1045 478Q1115 390 1109 310Q1090 230 1020 180Z"/>
        </defs>
        <g transform="translate(740 115) scale(.3333 .338)">
          <path fill="url(#body)" d="M468 600Q560 350 800 240Q1060 130 1510 120V10H2360Q2470 70 2525 155Q2600 230 2618 290Q2622 330 2612 640L2607 950Q2595 1120 2480 1230Q2350 1350 2020 1430Q1800 1482 1560 1482Q1200 1475 980 1392Q740 1310 600 1210Q510 1120 485 1040Q462 970 463 880Z"/>
          <path fill="url(#thin)" d="M468 600Q560 350 800 240Q1060 130 1510 130L1568 160L1500 335L1440 357L1100 420L760 460L600 480L560 700L485 700Z"/>
          <path fill="#d0cfd6" opacity=".6" d="M1700 1252L1570 1345L1440 1460L1600 1482H1785L1740 1350Z"/>
          <use href="#foamshape" fill="url(#foam)"/>
          <g clip-path="url(#foamclip)">
            <g filter="url(#soft)" fill="none" stroke-linecap="round" stroke-width="46">
              <path stroke="#6d7a8c" opacity=".5" d="M700 450L760 620L880 730M640 880L750 960L880 1000L1100 1060M930 840L980 930M1400 380L1480 420M1000 1150L1150 1220M1080 1300L1180 1370M1600 700L1660 780L1650 860"/>
              <path stroke="#677782" opacity=".5" d="M1810 200L1750 380L1960 440L2090 270M1960 450L2180 500L2290 640L2180 700L1980 640M2000 700L2140 800L2400 830M1700 960L1780 1100L1820 1220M1580 1150L1720 1220M2240 1000L2450 1110L2520 960M2500 430L2560 570"/>
              <path stroke="#a9b5c4" opacity=".42" d="M1200 300L1210 430M760 700L830 860L760 950M1400 600L1420 780L1500 860M1680 60L1650 160M1620 980L1600 1130M2330 840L2380 960M2520 320L2570 420M940 1040L1010 1090M2080 520L2030 620"/>
            </g>
            <path d="M1560 260Q1530 300 1568 360L1590 460L1650 400L1740 330L1790 200L1700 150Q1600 160 1560 260Z" fill="#73829d" opacity=".45"/>
            <path d="M1630 900L1700 1080L1720 1260L1860 1240L1850 1080L1760 970Z" fill="#6c7b86" opacity=".5"/>
            <path d="M2260 860Q2340 800 2420 850L2560 930V1140L2390 1150L2240 1090Q2270 980 2260 860Z" fill="#a2b0bb" opacity=".35"/>
          </g>
          <!-- upper left cells -->
          <path fill="url(#cA)" d="M725 550Q725 470 790 432Q880 395 970 425Q1020 445 1045 478L960 560Q930 600 895 638Q860 652 815 642Q735 615 725 550Z"/>
          <path fill="#8c9ab4" d="M560 640Q550 560 600 480L672 412Q690 500 630 650Z"/>
          <path fill="#a9b5dd" d="M485 700L490 560L560 500L553 620L565 690Q620 660 645 700Q680 780 640 860L600 900Q520 800 485 700Z"/>
          <path fill="#99a3c1" d="M468 600L500 740Q560 830 640 870Q620 930 550 975L492 1010L485 1040Q462 970 463 880Z"/>
          <path fill="url(#sky)" d="M883 680Q890 590 980 540Q1070 500 1160 518Q1220 530 1245 585Q1300 560 1325 600Q1360 690 1310 770Q1290 810 1240 850L1000 797Q930 790 900 740Q880 720 883 680Z"/>
          <path fill="#a5b1de" d="M1120 650L1250 580Q1300 560 1325 600Q1360 690 1310 770L1280 812L1180 900L900 765L980 760Z"/>
          <path fill="url(#cB)" d="M957 880Q960 800 1050 763Q1170 735 1285 812L1180 905Q1150 965 1110 980Q1050 995 1000 965Q955 930 957 880Z"/>
          <path fill="url(#pale)" d="M1115 1020Q1120 940 1200 895Q1290 840 1380 860Q1460 870 1476 920L1380 1000Q1320 1060 1290 1110L1240 1135Q1170 1120 1150 1100Q1115 1060 1115 1020Z"/>
          <path fill="#c0cae8" d="M1150 1103H1250Q1310 1080 1340 1020Q1400 960 1520 905Q1570 930 1572 1000Q1570 1080 1515 1140L1400 1250L1220 1135Z"/>
          <path fill="#b2bfcb" d="M490 1038Q560 950 660 952Q760 960 800 1020Q740 1060 620 1140L590 1195Q520 1130 490 1038Z"/>
          <path fill="#b0b4c6" d="M590 1195L620 1140Q760 1060 800 1025Q860 990 880 1040Q910 1110 880 1200Q850 1270 790 1313Q660 1250 590 1195Z"/>
          <path fill="#b0c0ca" opacity=".8" d="M790 1313Q860 1280 940 1300Q1000 1310 1035 1358L985 1392Z"/>
          <path fill="#a2a6ad" opacity=".8" d="M845 1250Q890 1210 940 1250Q980 1280 1000 1312Q880 1280 800 1305Z"/>
          <path fill="url(#cC)" d="M1171 1245Q1175 1160 1250 1112Q1400 1070 1515 1142L1410 1240Q1380 1310 1330 1333Q1270 1345 1215 1315Q1175 1285 1171 1245Z"/>
          <path fill="#bac7d2" d="M1380 1310Q1450 1210 1560 1190Q1680 1190 1710 1250Q1640 1290 1570 1342L1500 1420Q1440 1450 1400 1440Q1330 1400 1380 1310Z" opacity=".9"/>
          <!-- upper right cells -->
          <path fill="url(#cD)" d="M1402 440Q1405 370 1480 335Q1560 315 1640 350Q1680 370 1692 400L1630 462L1580 515Q1545 550 1500 546Q1405 530 1402 440Z"/>
          <path fill="#6b7585" opacity=".7" d="M1555 330Q1640 335 1690 400L1630 462L1585 475Z"/>
          <path fill="url(#pale)" d="M1562 590Q1565 530 1620 480L1700 400Q1780 380 1798 440Q1810 520 1770 590Q1720 660 1670 693Q1610 700 1585 665Q1560 640 1562 590Z"/>
          <path fill="#8795ac" opacity=".8" d="M1575 580Q1660 575 1720 635Q1700 680 1640 690Q1580 650 1575 580Z"/>
          <path fill="#979bab" d="M1800 545Q1900 480 1960 472Q2020 490 2018 590Q2000 680 1930 745L1860 800L1740 740Q1780 640 1800 545Z"/>
          <path fill="#8d9dab" opacity=".8" d="M1800 440L1925 480L1800 550Z"/>
          <path fill="url(#cE)" d="M1632 775Q1640 710 1700 682Q1800 650 1890 695Q1920 715 1925 740L1860 802Q1830 860 1785 880Q1730 892 1685 870Q1630 835 1632 775Z"/>
          <path fill="url(#pale)" d="M1792 930Q1800 850 1880 790Q1960 740 2020 750Q2050 830 2000 930Q1950 1000 1910 1030Q1850 1035 1820 990Q1790 970 1792 930Z"/>
          <path fill="#9fabba" opacity=".8" d="M2020 755Q2120 750 2155 818L2040 890Q2045 820 2020 755Z"/>
          <path fill="#9b9dab" d="M2020 910L2155 820Q2210 790 2235 830Q2270 920 2230 1020Q2200 1090 2140 1120L2020 1040L1960 1010Z"/>
          <path fill="#a8adbd" opacity=".8" d="M2105 1010Q2150 880 2210 815Q2250 850 2248 930Q2240 1030 2160 1080Z"/>
          <path fill="url(#cF)" d="M1867 1115Q1875 1050 1930 1022Q2030 990 2120 1030Q2150 1045 2155 1070L2095 1135Q2065 1195 2020 1218Q1970 1228 1920 1205Q1862 1170 1867 1115Z"/>
          <path fill="url(#pale)" opacity=".85" d="M2055 1210Q2080 1130 2220 1088Q2330 1085 2385 1150Q2290 1210 2240 1260Q2190 1345 2100 1342Q2040 1290 2055 1210Z"/>
          <path fill="#768ab6" d="M2080 350Q2090 260 2160 250Q2210 150 2265 80Q2340 90 2380 200Q2385 290 2330 335L2240 430Q2190 450 2130 430Q2070 400 2080 350Z"/>
          <path fill="#8896bd" d="M2160 250Q2210 150 2265 80Q2340 90 2380 200Q2380 290 2330 335Q2220 310 2160 250Z" opacity=".8"/>
          <path fill="#7c89ab" d="M2240 480Q2250 400 2340 335L2380 250Q2470 310 2478 430Q2440 530 2350 595Q2250 590 2240 480Z"/>
          <path fill="#8d9bc2" d="M2330 335L2380 250Q2470 310 2475 430L2420 400Z"/>
          <path fill="#67769c" opacity=".8" d="M2240 490Q2330 465 2395 530L2350 595Q2260 580 2240 490Z"/>
          <path fill="#677a9f" opacity=".85" d="M1880 200Q1920 140 2030 140Q2130 150 2168 190L2105 262L1870 215Z"/>
          <ellipse cx="1955" cy="260" rx="90" ry="98" fill="#7f90a8" opacity=".55"/>
          <path fill="#91a3c8" opacity=".8" d="M2400 230Q2450 180 2520 160L2545 290Q2450 290 2400 230Z"/>
          <path fill="url(#cG)" d="M2310 685Q2310 630 2350 600Q2450 560 2540 600Q2570 620 2575 640L2495 740Q2460 778 2420 780Q2320 770 2310 685Z"/>
          <path fill="#9ba9bd" d="M2468 820Q2480 760 2510 755Q2560 790 2605 930L2520 905Q2460 870 2468 820Z"/>
          <ellipse cx="2528" cy="1045" rx="40" ry="94" fill="#95a3b0"/>
          <ellipse cx="2180" cy="612" rx="83" ry="85" fill="#8e9ba9" opacity=".7"/>
          <path fill="#a1b1ce" opacity=".55" d="M1515 15H1790L1770 50Q1640 70 1515 20Z"/>
          <!-- edge highlights -->
          <g fill="none" stroke="#dfe5f2" stroke-width="4" opacity=".75">
            <path d="M960 560L1020 515M1190 905L1280 820M1320 568Q1400 560 1450 590M1630 462L1690 405M1670 695L1720 660M1860 800L1925 745M1415 1245L1510 1165M2105 1135L2170 1080M2110 262L2160 215M2345 595L2400 540"/>
            <path opacity=".5" d="M2020 480Q2100 470 2170 520M1550 905Q1630 900 1700 960M2230 805Q2310 800 2360 850M880 1005Q970 1000 1060 1060"/>
          </g>
          <!-- mesh facets -->
          <g stroke="#05070c" stroke-width="6" stroke-linecap="round" fill="none">
            <path d="M1232 340V346L1227 358H1238L1233 346M1364 366H1374L1370 374ZM1216 533V538M1079 602V605M1107 657L1118 665M1086 681V683M1278 808H1290V818H1278ZM1163 896V899M1108 920L1112 926M1216 958H1232L1230 970H1218ZM714 976V980M1103 1216L1110 1222M977 1256V1264M1000 1282V1288M999 1306V1312M1172 1276V1278M1388 1150V1158M1415 712V718M1360 145V149"/>
            <path d="M1680 53V55M1663 108V113M1756 84V88M1860 146H1872M1823 190V196M1852 242V246M2009 257V264M1779 370H1783M1728 385H1732M1711 456V460M1822 495L1830 488M1926 480L1930 486M1786 562V564M1475 568L1482 565M2140 530V536M2166 526H2178V538H2168ZM2196 528H2206M2206 590H2214M2290 78H2292M2305 92V94M2526 165V167M2522 207V210M2262 420V421M2612 624V628M1863 704V706M1518 846V848M1445 870V876M1785 880V881M1880 900L1888 897M2018 898V904M2123 768V775M2217 773H2232M2156 818V822M2445 902L2450 905M1955 1018H1960M1560 1088V1092M2004 1142V1152M1677 1209V1212M2048 1202V1206M2070 1296L2076 1296M1577 1340L1584 1342"/>
          </g>
        </g>
        <!-- rotation target -->
        <g fill="none" stroke="#9a1f7c" stroke-width="1">
          <circle cx="891" cy="246" r="119"/><circle cx="891" cy="246" r="59"/>
          <path d="M875 246.500H907M891.500 230V263" stroke="#6a1470"/>
          <path d="M945 222.500H955M949.500 217V228" stroke="#6d8fe8"/>
        </g>
        <!-- scale ruler -->
        <g class="ruler">
          <path d="M1142.500 620.500H1380.500V630.500H1142.500Z" fill="#fff" stroke="#000"/>
          <path d="M1142 620H1202V631H1142ZM1261 620H1321V631H1261Z"/>
          <text x="1142" y="617">0</text><text x="1261" y="617">0,005</text><text x="1391" y="617">0,01 (m)</text>
          <text x="1201" y="645">0,0025</text><text x="1320" y="645">0,0075</text>
        </g>
      </svg>
      <div class="brand"><b>ANSYS</b><span>2019 <b>R1</b></span><em>ACADEMIC</em></div>
      <svg class="triad" viewBox="0 0 120 120">
        <path d="M80 82V24" stroke="#0a0a8c" stroke-width="4"/><path d="M81 16L88 34Q81 38 74 34Z" fill="#0a0aa0"/>
        <path d="M79 80L30 88" stroke="#c01018" stroke-width="4"/><path d="M14 89L31 80V94Z" fill="#b01018"/>
        <path d="M80 80L96 103" stroke="#0c7c14" stroke-width="4"/><path d="M92 101L103 98L104 106L102 114L91 107Z" fill="#0c7c14"/>
        <circle cx="60" cy="73" r="7" fill="#12b5b8"/><circle cx="58" cy="71" r="3" fill="#5fdfe0"/>
        <text x="2" y="93" fill="#d02028">X</text><text x="105" y="120" fill="#2a9a30">Y</text><text x="80" y="11" fill="#1a1aa8">Z</text>
      </svg>
    </section>
    <div class="vtabs">
      <svg viewBox="0 0 12 17"><path d="M0 0H12V17H9L0 0Z" fill="#fff"/><path d="M1 0L10 17" stroke="#000"/></svg><button class="act">Geometrie</button><svg viewBox="0 0 12 17"><path d="M0 0H7L1 17H0Z" fill="#fff"/><path d="M8 0L2 17M4 11L8 17" stroke="#000"/></svg><button>Druckvorschau</button><svg viewBox="0 0 12 17"><path d="M8 0L2 17M2 0L9 17" stroke="#000"/></svg><button>Berichtvorschau</button><svg viewBox="0 0 12 17"><path d="M8 0L2 17" stroke="#000"/></svg>
    </div>
    <section class="panel metrics">
      <h2>Netzmetriken<svg class="pb"><use href="#push"/></svg><svg class="pb"><use href="#close"/></svg></h2>
      <div class="frame split">
        <div class="chartbox">
          <button class="ctl">Steuerungen</button>
          <div class="legend"><svg viewBox="0 0 52 12"><path d="M0 6H52" stroke="#c8141c" stroke-width="3"/><circle cx="26" cy="6" r="3.500" fill="#c8141c" stroke="#400"/></svg>Tet10</div>
          <div class="chart">
            <div class="ytitle">Anzahl der Elemente</div>
            <svg class="plot" role="img" aria-label="Anzahl der Elemente je Elementmaß">
              <g class="gl"><line x1="4.200%" x2="4.200%" y1="0" y2="118"/><line x1="17.800%" x2="17.800%" y1="0" y2="118"/><line x1="31.500%" x2="31.500%" y1="0" y2="118"/><line x1="45.200%" x2="45.200%" y1="0" y2="118"/><line x1="58.900%" x2="58.900%" y1="0" y2="118"/><line x1="72.600%" x2="72.600%" y1="0" y2="118"/><line x1="86.300%" x2="86.300%" y1="0" y2="118"/><line x1="0" x2="100%" y1="50.500" y2="50.500"/><line x1="0" x2="100%" y1="84.500" y2="84.500"/></g>
              <g class="tk"><line x1="0" x2="0" y1="118" y2="125"/><line x1="4.200%" x2="4.200%" y1="118" y2="125"/><line x1="17.800%" x2="17.800%" y1="118" y2="125"/><line x1="31.500%" x2="31.500%" y1="118" y2="125"/><line x1="45.200%" x2="45.200%" y1="118" y2="125"/><line x1="58.900%" x2="58.900%" y1="118" y2="125"/><line x1="72.600%" x2="72.600%" y1="118" y2="125"/><line x1="86.300%" x2="86.300%" y1="118" y2="125"/><line x1="100%" x2="100%" y1="118" y2="125"/><line x1="-7" x2="0" y1=".5" y2=".5"/><line x1="-7" x2="0" y1="50.500" y2="50.500"/><line x1="-7" x2="0" y1="84.500" y2="84.500"/><line x1="-7" x2="0" y1="118.500" y2="118.500"/></g>
              <rect x="0" y="0" width="100%" height="118" fill="none" stroke="#000" stroke-width="1"/>
              <g class="bars"><rect x="3.700%" y="117" width="28" height="1"/><rect x="13.700%" y="117" width="28" height="1"/><rect x="23.700%" y="117" width="28" height="1"/><rect x="33.700%" y="117" width="28" height="1"/><rect x="43.700%" y="114" width="28" height="4"/><rect x="53.700%" y="108" width="28" height="10"/><rect x="63.800%" y="89" width="28" height="29"/><rect x="73.800%" y="41" width="28" height="77"/><rect x="83.700%" y="0" width="28" height="118"/><rect x="93.800%" y="43" width="28" height="75"/></g>
              <g class="xl"><text x="-2" y="139">0,09</text><text x="4%" y="139">0,13</text><text x="17.700%" y="139">0,25</text><text x="31.400%" y="139">0,38</text><text x="45.100%" y="139">0,50</text><text x="58.800%" y="139">0,63</text><text x="72.600%" y="139">0,75</text><text x="86.300%" y="139">0,88</text><text x="100%" y="139">1,00</text></g>
              <g><text x="-68" y="5">3421240,00</text><text x="-68" y="54">2000000,00</text><text x="-68" y="89">1000000,00</text><text x="-68" y="123">0,00</text></g>
            </svg>
          </div>
          <div class="xtitle">Elementmaße</div>
        </div>
        <div class="scroll big"><svg><use href="#up"/></svg><i class="thumb t2"></i></div>
      </div>
      <button class="tv" aria-label="Fernwartung"><svg viewBox="0 0 20 20"><path d="M0 0H20V20H0Z" fill="#0f8fdc"/><circle cx="10" cy="10" r="9" fill="#fff"/><path d="M2 10L7 6V8.500H13V6L18 10L13 14V11.500H7V14Z" fill="#0f7fd0"/></svg></button>
    </section>
    <div class="btabs">
      <svg viewBox="0 0 22 20"><path d="M2 0L16 16Q18 19.500 22 19.500" fill="none" stroke="#888"/></svg><button>Meldungen</button><svg viewBox="0 0 14 20"><path d="M0 19.500Q5 19 6 15" fill="none" stroke="#888"/><path d="M-4 0L8 17Q10 19.500 14 19.500" fill="none" stroke="#888"/></svg><button class="act">Netzmetriken</button>
    </div>
  </div>
</main>

<footer class="status">
  <span></span><span></span>
  <span><svg class="i"><use href="#info"/></svg>3 Meldungen</span>
  <span>Keine Auswahl</span>
  <span class="units"><i>Metrisch (m, kg, N, s, V, A)</i><i>Grad</i><i>rad/s</i><i>Celsius</i></span>
  <svg class="grip" viewBox="0 0 12 12"><path d="M0 12L12 0M4 12L12 4M8 12L12 8" stroke="#888"/></svg>
</footer>
</body>
</html>
```
FILE: styles.css
```css
* { box-sizing: border-box; }
body {
  margin: 0; height: 100vh; display: flex; flex-direction: column; overflow: hidden;
  background: #f0f0f0; color: #000; font: 11px/16px "Noto Sans", sans-serif;
}
button, select, input { font: inherit; color: inherit; }
button { border: 0; background: none; padding: 0; white-space: nowrap; }
h1, h2, ul { margin: 0; padding: 0; font: inherit; }
svg { display: block; flex: none; overflow: visible; }
.defs { display: none; }
.defs text { font-family: "Liberation Sans", sans-serif; }
.defs .serif { font-family: "Liberation Serif", serif; font-weight: 700; }
.i { width: 16px; height: 16px; }
.i.b { width: 18px; height: 18px; }

.title { display: flex; align-items: center; height: 20px; padding-left: 2px; gap: 5px; background: #fff; flex: none; }
.title h1 { flex: 1; white-space: nowrap; }
.winbtns { display: flex; gap: 34px; padding-right: 17px; }
.winbtns svg { width: 12px; height: 12px; }

.toolbars { flex: none; }
.row { display: flex; height: 24px; padding-top: 1px; border-bottom: 1px solid #a0a0a0; box-shadow: inset 0 1px #fff; }
.row:last-child { border-bottom: 0; }
.bar { display: flex; align-items: center; padding: 0 4px 0 3px; }
.bar::before { content: ""; width: 2px; height: 19px; border-right: 1px solid #a0a0a0; margin-right: 3px; }
.bar + .bar { border-left: 1px solid #a0a0a0; }
.bar button { display: flex; align-items: center; gap: 3px; padding: 0 6px; height: 22px; }
.bar button.ic, .tools .ic { display: flex; align-items: center; justify-content: center; width: 27px; padding: 0; height: 22px; }
.bar .on, .tools .on { border: 1px solid #a0a0a0; border-right-color: #fff; border-bottom-color: #fff; background: #f8f8f8; }
.menu { padding-right: 8px; }
.menu button { padding: 0 5px; }
.bar button.drop { padding-right: 3px; }
.drop::after { content: ""; border: 4px solid transparent; border-top: 5px solid #000; border-bottom: 0; margin-left: 1px; }
.drop:disabled::after { border-top-color: #a0a0a0; }
button:disabled, select:disabled { color: #9a9a9a; opacity: 1; }
button:disabled .i text { fill: #909090; font: 9px "Liberation Sans", sans-serif; }
button:disabled .i .xs { font-size: 6px; }
.sep { width: 1px; height: 19px; background: #a0a0a0; margin: 0 4px; }
.note { padding: 0 6px 3px; }
.name { padding: 0 4px 0 0; }
.sel { position: relative; display: flex; }
.sel::after { content: ""; position: absolute; right: 6px; top: 7px; border: 4px solid transparent; border-top: 5px solid #000; border-bottom: 0; pointer-events: none; }
.bar .sel::after { border-top-color: #a0a0a0; }
select { appearance: none; border: 0; border-radius: 0; background: #f5f5f5; width: 138px; height: 19px; padding: 0 18px 0 4px; }
.tol { margin-left: 8px; }
.tol select { width: 148px; }
.slider { appearance: none; width: 132px; height: 16px; margin: 0 11px 6px 8px; background: linear-gradient(#808080, #808080) 0 8px / 100% 2px no-repeat; }
.slider::-webkit-slider-thumb { appearance: none; width: 3px; height: 9px; background: #808080; }

.work { flex: 1; min-height: 0; display: grid; grid-template-columns: 600px 1fr; gap: 4px; }
.left, .right { display: flex; flex-direction: column; min-width: 0; min-height: 0; }
.left { gap: 6px; padding-top: 1px; }
.panel { display: flex; flex-direction: column; position: relative; min-height: 0; }
.panel h2 { display: flex; align-items: center; gap: 4px; height: 21px; padding: 0 3px; flex: none; background: linear-gradient(90deg, #bccada, #d6e4f2); border-bottom: 1px solid #707680; color: #111; }
.panel h2 .pb:first-of-type { margin-left: auto; }
.pb { width: 12px; height: 12px; }
.frame { flex: 1; min-height: 0; background: #fff; border-left: 1px solid #888; display: flex; flex-direction: column; overflow: hidden; }
.split { flex-direction: row; }
.outline { flex: 1; }
.details { height: 353px; }
.planes { height: 87px; margin-bottom: 6px; }
.filter { display: flex; align-items: center; height: 26px; padding-left: 9px; background: #f0f0f0; border-bottom: 1px solid #a0a0a0; box-shadow: inset 3px 0 #f0f0f0, inset 4px 0 #a0a0a0; flex: none; }
.filter label { width: 38px; }
.sel.white select { background: #fff; width: 98px; height: 18px; }
.search { width: 143px; height: 18px; margin-left: 8px; border: 0; background: #fff; }
.tools { display: flex; align-items: center; height: 24px; padding-left: 10px; background: #f0f0f0; flex: none; box-shadow: inset 3px 0 #f0f0f0, inset 4px 0 #a0a0a0; }
.tools .ic { width: 24px; }
.tools .sm { display: flex; align-items: center; justify-content: center; width: 24px; height: 22px; }
.tree { list-style: none; font: 11px/16px "Liberation Sans", sans-serif; padding-top: 1px; }
.tree li { display: flex; align-items: center; height: 16px; padding-left: 9px; }
.tree li > span:last-child, .tree b { margin-left: 5px; }
.tree .l1 { padding-left: 36px; }
.tree .l2 { padding-left: 68px; }
.tree .l2::before { content: ""; width: 14px; height: 16px; margin-bottom: 15px; border-left: 1px dotted #999; border-bottom: 1px dotted #999; }
.tree .ok { margin-right: -5px; margin-left: -9px; position: relative; top: 3px; }
.tree .l2 .ok { margin-left: -6px; }
.tree li > .tg { position: relative; margin-right: 17px; }
.tree .l1 > .tg { margin-right: 15px; }
.tree .tg::after { content: ""; position: absolute; left: 9px; top: 4px; width: 10px; border-top: 1px dotted #999; }
.cursel { background: #efefef; }
.tg { display: block; width: 9px; height: 9px; border: 1px solid #777; background: #fff; font: 10px/7px "Liberation Sans", sans-serif; text-align: center; }

.clipbox { flex: 1; overflow: hidden; }
table { width: 100%; border-collapse: collapse; table-layout: fixed; }
tr { height: 18px; }
th, td { padding: 0 3px; height: 18px; text-align: left; font-weight: 400; border: 1px solid #a0a0a0; line-height: 17px; white-space: nowrap; }
th { width: 332px; }
th.head { font-weight: 700; }
td.g { width: 15px; padding: 0 2px; border-top: 0; border-bottom: 0; border-left: 0; }
tr:first-child > * { border-top: 0; }
label { display: flex; align-items: center; }
input[type=checkbox] { appearance: none; width: 12px; height: 12px; margin: 0 4px 0 0; border: 1px solid #c4c4c4; background: #fff; }
.list { display: flex; gap: 14px; flex: 1; padding: 2px 4px; align-items: flex-start; border: 1px solid #555; border-width: 1px 0; }
.list input[type=checkbox] { width: 13px; height: 13px; border: 2px solid #777; position: relative; }
.list input::after { content: ""; position: absolute; left: 2px; top: 0; width: 4px; height: 7px; border: solid #000; border-width: 0 2px 2px 0; transform: rotate(40deg); }
.scroll { width: 17px; background: #f0f0f0; display: flex; flex-direction: column; align-items: center; padding: 3px 0; flex: none; margin-left: 2px; }
.scroll svg { width: 12px; height: 12px; }
.scroll .dn { transform: rotate(180deg); margin-top: auto; }
.thumb { width: 14px; background: #cdcdcd; }
.t1 { height: 114px; margin-top: 21px; }
.big { padding-top: 15px; margin: 0; }
.t2 { width: 15px; flex: 1; margin: 7px 0 50px; }

.view { flex: 1; min-height: 0; position: relative; overflow: hidden; border-left: 1px solid #68789c; border-top: 2px solid #667294; background: linear-gradient(#6b8bdf, #8ea4e6 28%, #b3c2ee 52%, #d7e0f5 75%, #fcfcff); }
.model { position: absolute; inset: 0; width: 100%; height: 100%; }
.ruler { text-anchor: middle; }
.brand { position: absolute; right: 22px; top: 13px; width: 84px; color: #fff; display: flex; flex-direction: column; align-items: flex-end; }
.brand > b { font-size: 24px; line-height: 27px; }
.brand span { font-size: 16px; line-height: 18px; }
.brand em { align-self: stretch; border-top: 1px solid #fff; margin-top: 5px; padding-top: 4px; font: 13px/18px "Noto Sans", sans-serif; letter-spacing: 2px; white-space: nowrap; }
.triad { position: absolute; right: 55px; bottom: 47px; width: 120px; height: 120px; }
.triad text { font-size: 12px; }

.vtabs { display: flex; height: 18px; flex: none; border: 1px solid #000; border-left-color: #888; background: #f0f0f0; margin-bottom: 5px; }
.vtabs svg { width: 12px; height: 16px; }
.vtabs button + svg + button { margin-left: 1px; }
.vtabs .act { background: #fff; font-weight: 700; }
.metrics { height: 301px; background: #fff; }
.ctl { width: 114px; height: 25px; background: #f0f0f0; border: 1px solid; border-color: #fff #707070 #707070 #fff; box-shadow: inset -1px -1px #a8a8a8; font: 13px "Liberation Sans", sans-serif; margin: 15px 0 0 11px; }
.chartbox { flex: 1; display: flex; flex-direction: column; align-items: flex-start; min-width: 0; }
.legend { display: flex; align-items: center; gap: 4px; height: 19px; width: 93px; border: 1px solid #000; margin: 31px 0 0 123px; padding-left: 4px; }
.legend svg { width: 52px; height: 12px; }
.chart { display: flex; align-self: stretch; margin: 14px 35px 0 33px; padding-top: 1px; }
.ytitle { writing-mode: vertical-rl; transform: rotate(180deg); font: bold 10px/16px "DejaVu Sans", sans-serif; height: 119px; text-align: center; margin-right: 70px; white-space: nowrap; }
.plot { flex: 1 1 0; width: 0; height: 119px; }
.gl line { stroke: #a0a0a0; stroke-dasharray: 4 3; }
.tk line { stroke: #a0a0a0; }
.bars rect { fill: #f00; stroke: #200; }
.xl { text-anchor: middle; }
.xtitle { align-self: center; font-weight: 700; margin-top: 30px; padding-left: 82px; }
.tv { position: absolute; right: 0; bottom: 4px; width: 22px; height: 50px; border: 1px dotted #888; border-right: 0; background: #fff; border-radius: 5px 0 0 14px; padding: 0 0 16px 2px; }
.tv svg { width: 20px; height: 20px; }
.btabs { display: flex; height: 28px; flex: none; border-top: 1px solid #d8d8d8; padding-left: 3px; background: #f5f5f5; }
.btabs svg { width: 22px; height: 20px; }
.btabs svg + button + svg { width: 14px; }
.btabs button { height: 20px; border-bottom: 1px solid #888; }
.btabs .act { font-weight: 700; padding-right: 6px; border-right: 1px solid #888; background: #fafafa; }

.status { display: grid; grid-template-columns: 517px 247px 207px 1fr 438px 36px; gap: 3px; height: 20px; flex: none; align-items: stretch; }
.status > span { display: flex; align-items: center; gap: 4px; border-top: 1px solid #a0a0a0; border-left: 1px solid #a0a0a0; padding-left: 2px; white-space: nowrap; }
.status .units { gap: 12px; }
.units i { font-style: normal; }
.grip { width: 12px; height: 12px; align-self: end; justify-self: end; }
```
